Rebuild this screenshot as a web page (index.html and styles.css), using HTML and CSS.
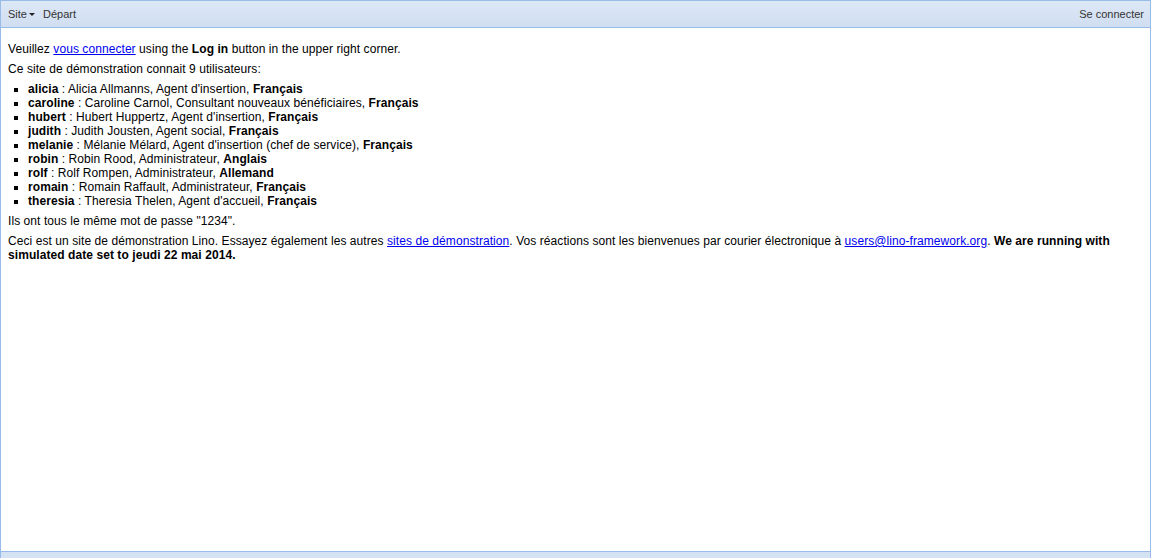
FILE: index.html
```html
<!DOCTYPE html>
<html>
<head>
<meta charset="utf-8">
<link rel="stylesheet" href="styles.css">
</head>
<body>
<div class="app">
  <div class="toolbar">
    <div class="tb-left">
      <span class="tb-btn">Site<span class="caret"></span></span>
      <span class="tb-btn">Départ</span>
    </div>
    <span class="tb-btn">Se connecter</span>
  </div>
  <div class="content">
    <p>Veuillez <a href="#">vous connecter</a> using the <b>Log in</b> button in the upper right corner.</p>
    <p>Ce site de démonstration connait 9 utilisateurs:</p>
    <ul>
      <li><b>alicia</b> : Alicia Allmanns, Agent d'insertion, <b>Français</b></li>
      <li><b>caroline</b> : Caroline Carnol, Consultant nouveaux bénéficiaires, <b>Français</b></li>
      <li><b>hubert</b> : Hubert Huppertz, Agent d'insertion, <b>Français</b></li>
      <li><b>judith</b> : Judith Jousten, Agent social, <b>Français</b></li>
      <li><b>melanie</b> : Mélanie Mélard, Agent d'insertion (chef de service), <b>Français</b></li>
      <li><b>robin</b> : Robin Rood, Administrateur, <b>Anglais</b></li>
      <li><b>rolf</b> : Rolf Rompen, Administrateur, <b>Allemand</b></li>
      <li><b>romain</b> : Romain Raffault, Administrateur, <b>Français</b></li>
      <li><b>theresia</b> : Theresia Thelen, Agent d'accueil, <b>Français</b></li>
    </ul>
    <p>Ils ont tous le même mot de passe "1234".</p>
    <p>Ceci est un site de démonstration Lino. Essayez également les autres <a href="#">sites de démonstration</a>. Vos réactions sont les bienvenues par courier électronique à <a href="#">users@lino-framework.org</a>. <b>We are running with simulated date set to jeudi 22 mai 2014.</b></p>
  </div>
  <div class="footer"></div>
</div>
</body>
</html>
```

FILE: styles.css
```css
html, body {
  margin: 0;
  padding: 0;
}
body {
  font-family: "Liberation Sans", Arial, sans-serif;
  font-size: 12px;
  color: #000;
}
.app {
  height: 558px;
  display: flex;
  flex-direction: column;
  box-sizing: border-box;
}
.toolbar {
  height: 28px;
  box-sizing: border-box;
  border: 1px solid #99bbe8;
  background: linear-gradient(#dde8f6, #d0def1);
  display: flex;
  align-items: center;
  justify-content: space-between;
  padding: 0 6px 0 7px;
  color: #333;
  font-size: 11px;
}
.tb-left {
  display: flex;
  align-items: center;
  gap: 8px;
}
.tb-btn {
  display: inline-flex;
  align-items: center;
}
.caret {
  display: inline-block;
  width: 0;
  height: 0;
  border-left: 3px solid transparent;
  border-right: 3px solid transparent;
  border-top: 3px solid #222;
  margin-left: 2px;
  margin-top: 1px;
}
.content {
  flex: 1;
  background: #fff;
  border-left: 1px solid #99bbe8;
  border-right: 1px solid #99bbe8;
  padding: 8px 7px 7px 7px;
  line-height: 14px;
  letter-spacing: 0.07px;
  overflow: hidden;
}
.content p {
  margin: 6px 0;
}
.content ul {
  margin: 6px 0;
  padding-left: 20px;
  list-style: square;
}
.content a {
  color: #0000ee;
}
.footer {
  height: 7px;
  box-sizing: border-box;
  border-top: 1px solid #99bbe8;
  border-left: 1px solid #99bbe8;
  border-right: 1px solid #99bbe8;
  background: #d5e2f3;
}
```
